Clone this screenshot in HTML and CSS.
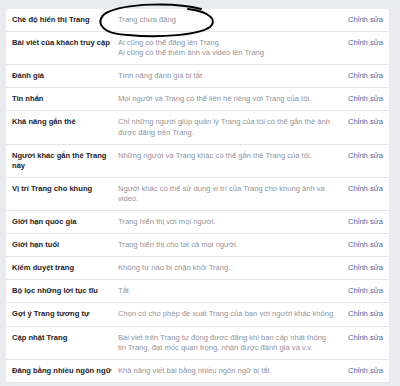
FILE: index.html
```html
<!DOCTYPE html>
<html lang="vi">
  <head>
    <meta charset="UTF-8" />
    <meta name="viewport" content="width=device-width, initial-scale=1.0" />
    <title>Cài đặt chung</title>
    <link rel="stylesheet" href="styles.css">
  </head>
  <body>
    <div class="page">
      <div class="settings">
        <div class="row">
          <div class="label">Chế độ hiển thị Trang</div>
          <div class="desc">Trang chưa đăng</div>
          <a class="edit" href="#">Chỉnh sửa</a>
        </div>
        <div class="row">
          <div class="label">Bài viết của khách truy cập</div>
          <div class="desc">Ai cũng có thể đăng lên Trang<br>Ai cũng có thể thêm ảnh và video lên Trang</div>
          <a class="edit" href="#">Chỉnh sửa</a>
        </div>
        <div class="row">
          <div class="label">Đánh giá</div>
          <div class="desc">Tính năng đánh giá bị tắt</div>
          <a class="edit" href="#">Chỉnh sửa</a>
        </div>
        <div class="row">
          <div class="label">Tin nhắn</div>
          <div class="desc">Mọi người và Trang có thể liên hệ riêng với Trang của tôi.</div>
          <a class="edit" href="#">Chỉnh sửa</a>
        </div>
        <div class="row">
          <div class="label">Khả năng gắn thẻ</div>
          <div class="desc">Chỉ những người giúp quản lý Trang của tôi có thể gắn thẻ ảnh được đăng trên Trang.</div>
          <a class="edit" href="#">Chỉnh sửa</a>
        </div>
        <div class="row">
          <div class="label">Người khác gắn thẻ Trang này</div>
          <div class="desc">Những người và Trang khác có thể gắn thẻ Trang của tôi.</div>
          <a class="edit" href="#">Chỉnh sửa</a>
        </div>
        <div class="row">
          <div class="label">Vị trí Trang cho khung</div>
          <div class="desc">Người khác có thể sử dụng vị trí của Trang cho khung ảnh và video.</div>
          <a class="edit" href="#">Chỉnh sửa</a>
        </div>
        <div class="row">
          <div class="label">Giới hạn quốc gia</div>
          <div class="desc">Trang hiển thị với mọi người.</div>
          <a class="edit" href="#">Chỉnh sửa</a>
        </div>
        <div class="row">
          <div class="label">Giới hạn tuổi</div>
          <div class="desc">Trang hiển thị cho tất cả mọi người.</div>
          <a class="edit" href="#">Chỉnh sửa</a>
        </div>
        <div class="row">
          <div class="label">Kiểm duyệt trang</div>
          <div class="desc">Không từ nào bị chặn khỏi Trang.</div>
          <a class="edit" href="#">Chỉnh sửa</a>
        </div>
        <div class="row">
          <div class="label">Bộ lọc những lời tục tĩu</div>
          <div class="desc">Tắt</div>
          <a class="edit" href="#">Chỉnh sửa</a>
        </div>
        <div class="row">
          <div class="label">Gợi ý Trang tương tự</div>
          <div class="desc">Chọn có cho phép đề xuất Trang của bạn với người khác không</div>
          <a class="edit" href="#">Chỉnh sửa</a>
        </div>
        <div class="row">
          <div class="label">Cập nhật Trang</div>
          <div class="desc">Bài viết trên Trang tự động được đăng khi bạn cập nhật thông tin Trang, đạt mốc quan trọng, nhận được đánh giá và v.v.</div>
          <a class="edit" href="#">Chỉnh sửa</a>
        </div>
        <div class="row">
          <div class="label">Đăng bằng nhiều ngôn ngữ</div>
          <div class="desc">Khả năng viết bài bằng nhiều ngôn ngữ bị tắt</div>
          <a class="edit" href="#">Chỉnh sửa</a>
        </div>
      </div>

      <!-- hand-drawn circle around the first value -->
      <svg class="scribble" width="400" height="50" viewBox="0 0 400 50">
        <path d="M201 9 C175 2, 125 3, 106 13 C95 20, 99 34, 128 35 C160 38, 199 35, 210 27 C217 21, 212 12, 188 9"
              fill="none" stroke="#000" stroke-width="2" stroke-linecap="round" />
      </svg>
    </div>
  </body>
</html>
```

FILE: styles.css
```css
body {
  margin: 0;
  padding: 0;
  background-color: #e9ebee;
  font-family: "Liberation Sans", Arial, sans-serif;
}
.page {
  position: relative;
  padding: 9px 11px 0 6px;
}
.settings {
  background-color: #fff;
  border-radius: 2px;
}
.row {
  display: grid;
  grid-template-columns: 104px 218px auto;
  column-gap: 2px;
  padding: 6px 0 6px 6px;
  border-bottom: 1px solid #e5e6e9;
  font-size: 7.6px;
  line-height: 10.1px;
}
.label {
  color: #1d2129;
  font-weight: bold;
}
.desc {
  color: #90949c;
}
.edit {
  color: #4b67a1;
  text-decoration: none;
  padding-left: 10px;
}
.scribble {
  position: absolute;
  left: 0;
  top: 0;
}
```
